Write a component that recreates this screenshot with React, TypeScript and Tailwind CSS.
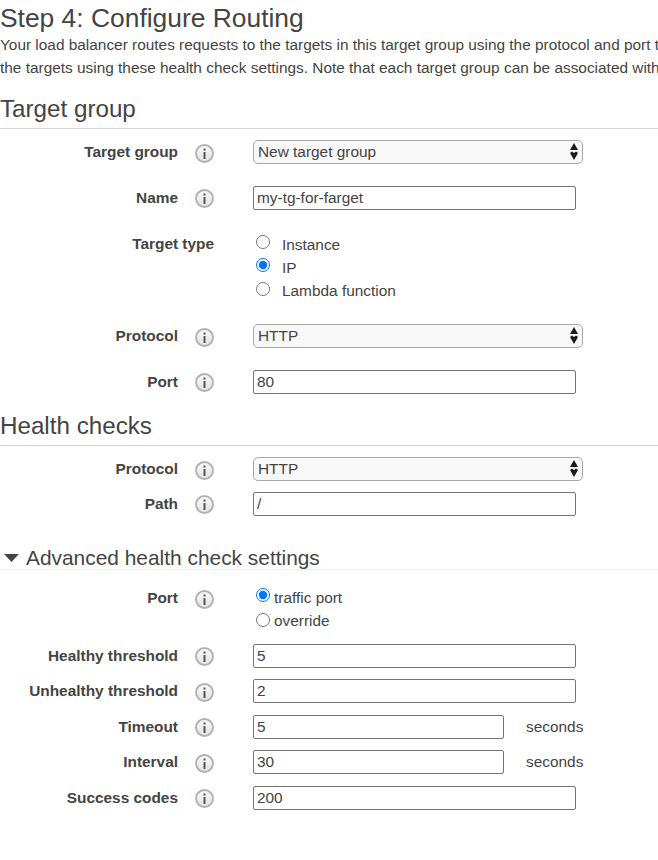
const font = "font-['Liberation_Sans',Arial,sans-serif]";

function InfoIcon() {
  return (
    <svg className="h-[19px] w-[19px]" viewBox="0 0 19 19">
      <defs>
        <linearGradient id="info-fill" x1="0" y1="0" x2="0" y2="1">
          <stop offset="0" stopColor="#fafafa" />
          <stop offset="1" stopColor="#e2e2e2" />
        </linearGradient>
      </defs>
      <circle cx="9.5" cy="9.5" r="8.5" fill="url(#info-fill)" stroke="#b0b0b0" strokeWidth="1.8" />
      <rect x="8.5" y="8" width="2" height="7" fill="#555555" />
      <rect x="8.5" y="4.5" width="2" height="2" fill="#555555" />
    </svg>
  );
}

function Row({ label, iconTop = 'pt-[3px]', className = '', children }: { label: string; iconTop?: string; className?: string; children: React.ReactNode }) {
  return (
    <div className={`flex items-start ${className}`}>
      <div className="w-[178px] shrink-0 text-right text-[15.4px] leading-[24px] font-bold text-[#444444]">{label}</div>
      <div className={`flex w-[75px] shrink-0 pl-[17px] ${iconTop}`}>
        <InfoIcon />
      </div>
      {children}
    </div>
  );
}

function Select({ value }: { value: string }) {
  return (
    <div className="relative h-[24px] w-[330px]">
      <select
        defaultValue={value}
        className="h-full w-full appearance-none rounded-[5px] border border-[#a6a6a6] bg-[#f8f8f8] pl-[4px] text-[15.4px] leading-[20px] text-[#444444]"
      >
        <option>{value}</option>
      </select>
      <svg className="pointer-events-none absolute top-[3px] right-[4px] h-[17px] w-[10px]" viewBox="0 0 10 17">
        <path d="M5 0 L9 7 H1 Z" fill="#1a1a1a" />
        <path d="M5 17 L1 10 L3 8.5 L5 10 L7 8.5 L9 10 Z" fill="#1a1a1a" />
      </svg>
    </div>
  );
}

function Input({ value, short = false }: { value: string; short?: boolean }) {
  return (
    <input
      readOnly
      value={value}
      className={`h-[24px] ${short ? 'w-[251px]' : 'w-[323px]'} rounded-[2px] border border-[#767676] bg-white px-[3px] text-[15.4px] text-[#444444]`}
    />
  );
}

function Radio({ label, checked = false, name, gap, shift }: { label: string; checked?: boolean; name: string; gap: string; shift: string }) {
  return (
    <label className={`flex h-[23px] items-center ${gap} text-[15.4px] text-[#444444]`}>
      <input type="radio" name={name} defaultChecked={checked} className={`m-0 h-[14px] w-[14px] ${shift}`} />
      {label}
    </label>
  );
}

function Seconds({ value }: { value: string }) {
  return (
    <div className="flex items-center">
      <Input value={value} short />
      <span className="ml-[22px] text-[15.4px] text-[#444444]">seconds</span>
    </div>
  );
}

export default function App() {
  return (
    <div className={`h-[860px] w-[658px] overflow-hidden bg-white whitespace-nowrap ${font}`}>
      {/* Heading */}
      <h1 className="mt-[3px] text-[26.4px] leading-[30px] font-normal text-[#444444]">Step 4: Configure Routing</h1>
      <p className="w-[760px] text-[15.4px] leading-[23px] text-[#444444]">
        Your load balancer routes requests to the targets in this target group using the protocol and port that you specify, and performs health checks on
        <br />
        the targets using these health check settings. Note that each target group can be associated with only one load balancer.
      </p>

      {/* Target group */}
      <h2 className="mt-[13px] border-b border-[#d5d5d5] pb-[2px] text-[24.2px] leading-[34px] font-normal text-[#444444]">Target group</h2>
      <Row label="Target group" iconTop="pt-[4px]" className="mt-[11px]">
        <Select value="New target group" />
      </Row>
      <Row label="Name" className="mt-[22px]">
        <Input value="my-tg-for-farget" />
      </Row>

      {/* Target type has no info icon, its label runs up to the radios */}
      <div className="mt-[22px] flex items-start">
        <div className="w-[214px] shrink-0 text-right text-[15.4px] leading-[24px] font-bold text-[#444444]">Target type</div>
        <div className="pt-px pl-[42px]">
          <Radio name="type" label="Instance" gap="gap-[12px]" shift="-translate-y-[3px]" />
          <Radio name="type" label="IP" checked gap="gap-[12px]" shift="-translate-y-[3px]" />
          <Radio name="type" label="Lambda function" gap="gap-[12px]" shift="-translate-y-[2px]" />
        </div>
      </div>
      <Row label="Protocol" iconTop="pt-[4px]" className="mt-[22px]">
        <Select value="HTTP" />
      </Row>
      <Row label="Port" className="mt-[22px]">
        <Input value="80" />
      </Row>

      {/* Health checks */}
      <h2 className="mt-[15px] border-b border-[#d5d5d5] pb-[2px] text-[24.2px] leading-[34px] font-normal text-[#444444]">Health checks</h2>
      <Row label="Protocol" iconTop="pt-[4px]" className="mt-[11px]">
        <Select value="HTTP" />
      </Row>
      <Row label="Path" className="mt-[11px]">
        <Input value="/" />
      </Row>

      {/* Advanced */}
      <div className="mt-[31px] flex h-[23px] items-center gap-[7px] border-b border-[#eeeeee] pl-[4px] text-[20.9px] text-[#444444]">
        <svg className="h-[8px] w-[15px]" viewBox="0 0 15 8">
          <path d="M0 0 H15 L7.5 8 Z" fill="#444444" />
        </svg>
        Advanced health check settings
      </div>
      <Row label="Port" iconTop="pt-[4px]" className="mt-[16px]">
        <div className="pl-[3px]">
          <Radio name="port" label="traffic port" checked gap="gap-[4px]" shift="-translate-y-[3px]" />
          <Radio name="port" label="override" gap="gap-[4px]" shift="-translate-y-[1px]" />
        </div>
      </Row>
      <Row label="Healthy threshold" className="mt-[12px]">
        <Input value="5" />
      </Row>
      <Row label="Unhealthy threshold" iconTop="pt-[4px]" className="mt-[11px]">
        <Input value="2" />
      </Row>
      <Row label="Timeout" className="mt-[12px]">
        <Seconds value="5" />
      </Row>
      <Row label="Interval" iconTop="pt-[4px]" className="mt-[11px]">
        <Seconds value="30" />
      </Row>
      <Row label="Success codes" className="mt-[12px]">
        <Input value="200" />
      </Row>
    </div>
  );
}
